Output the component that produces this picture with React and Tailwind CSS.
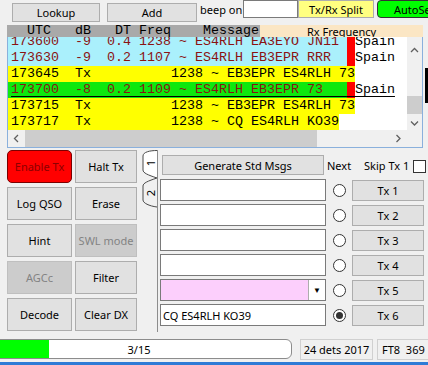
const BTN = "border border-[#adadad] bg-[#e1e1e1] text-black";
const BTN_OFF = "border border-[#bfbfbf] bg-[#cccccc] text-[#838383]";

const BAND = [
  { text: "173600  -9  0.4 1238 ~ ES4RLH EA3EYO JN11 ", kind: "rx" },
  { text: "173630  -9  0.2 1107 ~ ES4RLH EB3EPR RRR  ", kind: "rx" },
  { text: "173645  Tx          1238 ~ EB3EPR ES4RLH 73", kind: "tx" },
  { text: "173700  -8  0.2 1109 ~ ES4RLH EB3EPR 73   ", kind: "me" },
  { text: "173715  Tx          1238 ~ EB3EPR ES4RLH 73", kind: "tx" },
  { text: "173717  Tx          1238 ~ CQ ES4RLH KO39", kind: "tx" },
];

function Chevron({ dir }) {
  const d = {
    up: "M1 5 L4.5 1.5 L8 5",
    down: "M1 1.5 L4.5 5 L8 1.5",
    left: "M5 1 L1.5 4.5 L5 8",
    right: "M1.5 1 L5 4.5 L1.5 8",
  }[dir];
  const vert = dir === "up" || dir === "down";
  return (
    <svg width={vert ? 9 : 7} height={vert ? 7 : 9} className="shrink-0">
      <path d={d} fill="none" stroke="#606060" strokeWidth="1.3" />
    </svg>
  );
}

function BandRow({ text, kind }) {
  if (kind === "tx") {
    return (
      <div className="flex h-[16px]">
        <span className="inline-block h-[16px] bg-[#ffff00] pl-[3px] leading-[16px] text-black">{text}</span>
      </div>
    );
  }
  if (kind === "me") {
    return (
      <div className="flex h-[16px]">
        <span className="inline-block h-[16px] bg-[#0ee80e] pl-[3px] leading-[16px] text-[#8b1212] underline decoration-black underline-offset-[3px]">{text}</span>
        <span className="inline-block h-[16px] w-[8px] bg-[#ff0000] leading-[16px] underline decoration-black underline-offset-[3px]">{"\u00a0"}</span>
        <span className="inline-block h-[16px] leading-[16px] text-black underline decoration-black underline-offset-[3px]">Spain</span>
      </div>
    );
  }
  return (
    <div className="flex h-[16px]">
      <span className="inline-block h-[16px] bg-[#aaf0fc] pl-[3px] leading-[16px] text-[#8b1212]">{text}</span>
      <span className="inline-block h-[16px] w-[8px] bg-[#ff0000]" />
      <span className="inline-block h-[16px] leading-[16px] text-black">Spain</span>
    </div>
  );
}

function MsgRow({ children, checked, label, pink }) {
  return (
    <div className="mt-[3px] flex h-[22px] items-start">
      {pink ? (
        <div className="ml-[2px] flex h-[22px] w-[166px] shrink-0 border border-[#7a7a7a] bg-white">
          <div className="h-full w-[147px] bg-[#fccffc]" />
          <div className="flex h-full flex-1 items-center justify-center border-l border-[#adadad] bg-white text-[8px]">▼</div>
        </div>
      ) : (
        <div className="ml-[2px] flex h-[22px] w-[166px] shrink-0 items-center border border-[#7a7a7a] bg-white pl-[2px]">
          {children}
        </div>
      )}
      <div className="flex h-[22px] w-[26px] shrink-0 items-center justify-center">
        <div className="flex h-[13px] w-[13px] items-center justify-center rounded-full border border-[#333333] bg-white">
          {checked && <div className="h-[7px] w-[7px] rounded-full bg-[#333333]" />}
        </div>
      </div>
      <button className={`mt-[1px] h-[21px] w-[72px] shrink-0 ${BTN}`}>{label}</button>
    </div>
  );
}

export default function App() {
  return (
    <div className="flex h-[365px] w-[428px] flex-col overflow-hidden bg-[#f0f0f0] font-['Noto_Sans',sans-serif] text-[11px] leading-none text-black">
      {/* ── Top toolbar ─────────────────────────────────────────── */}
      <div className="flex h-[25px] shrink-0 items-start">
        <button className={`ml-[12px] mt-[3px] h-[19px] w-[88px] shrink-0 ${BTN}`}>Lookup</button>
        <button className={`ml-[7px] mt-[3px] h-[19px] w-[90px] shrink-0 ${BTN}`}>Add</button>
        <span className="ml-[3px] mt-[4px] w-[43px] shrink-0 whitespace-nowrap">beep on</span>
        <div className="h-[18px] w-[55px] shrink-0 border border-[#7a7a7a] bg-white" />
        <button className="h-[18px] w-[76px] shrink-0 border border-[#adadad] bg-[#ffff80]">Tx/Rx Split</button>
        <button className="ml-[3px] h-[18px] w-[80px] shrink-0 rounded-[4px] border border-[#333333] bg-[#00ff00] pl-[16px] text-left">AutoSeq</button>
      </div>

      {/* ── Column headers ──────────────────────────────────────── */}
      <div className="flex h-[12px] shrink-0">
        <div className="ml-[7px] w-[253px] shrink-0 overflow-hidden whitespace-pre bg-[#a9a9a9] pl-[4px] font-['Liberation_Mono',monospace] text-[13.33px] leading-[12px]">
          {"  UTC   dB   DT Freq    Message"}
        </div>
        <div className="w-[163px] shrink-0 bg-[#fbe6c4] pl-[47px] leading-[13px]">Rx Frequency</div>
      </div>

      {/* ── Band activity ───────────────────────────────────────── */}
      <div className="flex shrink-0">
        <div className="ml-[7px] flex w-[416px] shrink-0 flex-col border-x border-b border-[#8ab0dc]">
          <div className="flex h-[93px]">
            <div className="w-[399px] shrink-0 overflow-hidden whitespace-pre bg-white font-['Liberation_Mono',monospace] text-[13.33px]">
              <div className="-mt-[3px]">
                {BAND.map((r, i) => (
                  <BandRow key={i} {...r} />
                ))}
              </div>
            </div>
            <div className="flex w-[15px] shrink-0 flex-col items-center bg-[#f0f0f0]">
              <div className="mt-[10px]"><Chevron dir="up" /></div>
              <div className="mt-[42px] h-[18px] w-full bg-[#cdcdcd]" />
              <div className="mt-[6px]"><Chevron dir="down" /></div>
            </div>
          </div>
          <div className="flex h-[17px]">
            <div className="flex w-[17px] shrink-0 items-center justify-center"><Chevron dir="left" /></div>
            <div className="w-[292px] shrink-0 bg-[#cdcdcd]" />
            <div className="w-[73px] shrink-0" />
            <div className="flex w-[17px] shrink-0 items-center justify-center"><Chevron dir="right" /></div>
            <div className="w-[15px] shrink-0" />
          </div>
        </div>
        <div className="ml-[2px] mt-[31px] h-[35px] w-[3px] shrink-0 bg-black" />
      </div>

      {/* ── Controls + message tabs ─────────────────────────────── */}
      <div className="flex h-[184px] shrink-0 items-start">
        <div className="ml-[7px] mt-[2px] grid shrink-0 grid-cols-[65px_62px] gap-x-[3px] gap-y-[4px]">
          <button className="h-[33px] rounded-[5px] border border-[#7a0000] bg-[#ff0000] text-[#8b0000]">Enable Tx</button>
          <button className={`h-[33px] ${BTN}`}>Halt Tx</button>
          <button className={`h-[33px] ${BTN}`}>Log QSO</button>
          <button className={`h-[33px] ${BTN}`}>Erase</button>
          <button className={`h-[33px] ${BTN}`}>Hint</button>
          <button className={`h-[33px] ${BTN_OFF}`}>SWL mode</button>
          <button className={`h-[33px] ${BTN_OFF}`}>AGCc</button>
          <button className={`h-[33px] ${BTN}`}>Filter</button>
          <button className={`h-[33px] ${BTN}`}>Decode</button>
          <button className={`h-[33px] ${BTN}`}>Clear DX</button>
        </div>

        <svg width="20" height="65" className="shrink-0">
          <path d="M20 2.5 C13 2.5 6 4 6 8 L6 22 C6 25 11 27 20 30" fill="#ffffff" stroke="#4a4a4a" />
          <path d="M20 30 C11 33 6 35 6 38 L6 52 C6 55 12 58 20 59" fill="#f0f0f0" stroke="#4a4a4a" />
          <text x="13" y="15" fontSize="11" fontFamily="Noto Sans" textAnchor="middle" dominantBaseline="central" transform="rotate(-90 13 15)">1</text>
          <text x="13" y="45" fontSize="11" fontFamily="Noto Sans" textAnchor="middle" dominantBaseline="central" transform="rotate(-90 13 45)">2</text>
        </svg>

        <div className="mt-[2px] flex h-[182px] flex-1 flex-col border-l border-[#8c8c8c]">
          <div className="mt-[5px] flex h-[20px] items-center">
            <button className={`ml-[4px] h-[20px] w-[162px] shrink-0 ${BTN}`}>Generate Std Msgs</button>
            <span className="w-[40px] shrink-0 pl-[3px]">Next</span>
            <span className="w-[49px] shrink-0 whitespace-nowrap">Skip Tx 1</span>
            <div className="mt-[3px] h-[13px] w-[13px] shrink-0 border border-[#333333] bg-white" />
          </div>
          <div className="h-[1px]" />
          <MsgRow label="Tx 1" />
          <MsgRow label="Tx 2" />
          <MsgRow label="Tx 3" />
          <MsgRow label="Tx 4" />
          <MsgRow label="Tx 5" pink />
          <MsgRow label="Tx 6" checked>CQ ES4RLH KO39</MsgRow>
        </div>
      </div>

      {/* ── Status bar ──────────────────────────────────────────── */}
      <div className="flex h-[30px] shrink-0 items-start pt-[7px]">
        <div className="relative -ml-[2px] h-[20px] w-[294px] shrink-0 overflow-hidden rounded-r-[6px] border border-[#8c8c8c] bg-white">
          <div className="h-full w-[50px] bg-[#00ff00]" />
          <div className="absolute inset-0 flex items-center justify-center pr-[12px]">3/15</div>
        </div>
        <div className="ml-[8px] flex h-[21px] w-[73px] shrink-0 items-center justify-center whitespace-nowrap border border-[#d0d0d0]">24 dets 2017</div>
        <div className="ml-[4px] flex h-[21px] w-[60px] shrink-0 items-center whitespace-pre border border-[#d0d0d0] pl-[4px]">{"FT8  369"}</div>
      </div>
      <div className="h-[3px] shrink-0 bg-[#2e7bd6]" />
    </div>
  );
}
